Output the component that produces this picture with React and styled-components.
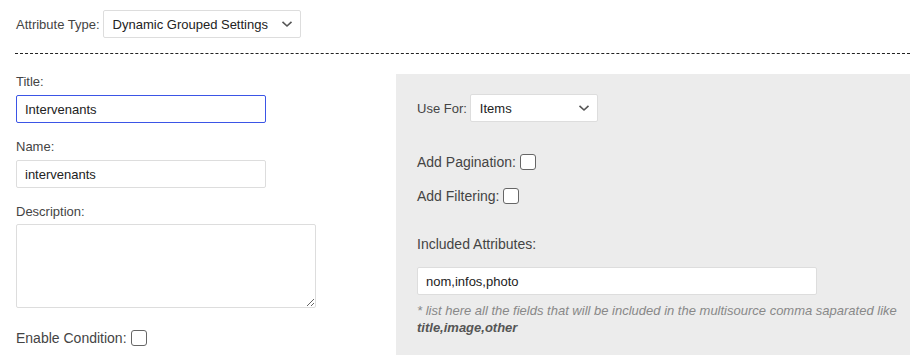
import styled, { createGlobalStyle } from "styled-components";

const GlobalStyle = createGlobalStyle`
  body {
    margin: 0;
    background: #fff;
    font-family: "Liberation Sans", Arial, sans-serif;
    font-size: 13px;
    color: #444;
    overflow: hidden;
  }
`;

function Chevron() {
  return (
    <svg width="12" height="8" viewBox="0 0 12 8">
      <path d="M1.5 1.8 L6 6 L10.5 1.8" fill="none" stroke="#555" strokeWidth="1.6" />
    </svg>
  );
}

function Select({ value, width }) {
  return (
    <SelectWrap $width={width}>
      <SelectBox defaultValue={value}>
        <option>{value}</option>
      </SelectBox>
      <Arrow>
        <Chevron />
      </Arrow>
    </SelectWrap>
  );
}

function CheckRow({ label, top }) {
  return (
    <InlineRow $top={top}>
      <span>{label}</span>
      <Check type="checkbox" />
    </InlineRow>
  );
}

export default function App() {
  return (
    <Page>
      <GlobalStyle />
      <TopRow>
        <Label>Attribute Type:</Label>
        <Select value="Dynamic Grouped Settings" width={198} />
      </TopRow>
      <Divider />
      <Columns>
        <LeftCol>
          <Label>Title:</Label>
          <TextInput $width={250} $focused defaultValue="Intervenants" />
          <Label $top={16}>Name:</Label>
          <TextInput $width={250} defaultValue="intervenants" />
          <Label $top={16}>Description:</Label>
          <TextArea />
          <InlineRow $top={22}>
            <span>Enable Condition:</span>
            <Check type="checkbox" />
          </InlineRow>
        </LeftCol>
        <Panel>
          <TopRow>
            <Label>Use For:</Label>
            <Select value="Items" width={128} />
          </TopRow>
          <CheckRow label="Add Pagination:" top={32} />
          <CheckRow label="Add Filtering:" top={18} />
          <Label $top={33} $size={14}>Included Attributes:</Label>
          <TextInput $width={400} $gap={15} defaultValue="nom,infos,photo" />
          <Help>
            * list here all the fields that will be included in the multisource comma saparated like{" "}
            <b>title,image,other</b>
          </Help>
        </Panel>
      </Columns>
    </Page>
  );
}

const Page = styled.div`
  padding: 10px 0 0 16px;
`;

const TopRow = styled.div`
  display: flex;
  align-items: center;
  gap: 3px;
`;

const Label = styled.div`
  line-height: 15px;
  font-size: ${(p) => p.$size || 13}px;
  color: #444;
  margin-top: ${(p) => p.$top || 0}px;
`;

const SelectWrap = styled.div`
  position: relative;
  width: ${(p) => p.$width}px;
  height: 28px;
`;

const SelectBox = styled.select`
  appearance: none;
  width: 100%;
  height: 100%;
  box-sizing: border-box;
  border: 1px solid #ddd;
  border-radius: 2px;
  background: #fff;
  padding: 0 28px 0 9px;
  font-family: "Liberation Sans", Arial, sans-serif;
  font-size: 13px;
  color: #222;
  outline: none;
`;

const Arrow = styled.span`
  position: absolute;
  right: 8px;
  top: 10px;
  display: flex;
  pointer-events: none;
`;

const Divider = styled.div`
  border-top: 1px dashed #222;
  margin: 15px 0 20px -1px;
`;

const Columns = styled.div`
  display: flex;
  align-items: flex-start;
`;

const LeftCol = styled.div`
  width: 380px;
  display: flex;
  flex-direction: column;
  align-items: flex-start;
`;

const TextInput = styled.input`
  box-sizing: border-box;
  width: ${(p) => p.$width}px;
  height: 28px;
  margin-top: ${(p) => p.$gap || 6}px;
  padding: 0 8px;
  border: 1px solid ${(p) => (p.$focused ? "#3b55e6" : "#ddd")};
  border-radius: 2px;
  background: #fff;
  font-family: "Liberation Sans", Arial, sans-serif;
  font-size: 13px;
  color: #222;
  outline: none;
`;

const TextArea = styled.textarea`
  box-sizing: border-box;
  width: 300px;
  height: 84px;
  margin-top: 5px;
  border: 1px solid #ddd;
  border-radius: 2px;
  outline: none;
  font-family: "Liberation Sans", Arial, sans-serif;
`;

const InlineRow = styled.label`
  display: flex;
  align-items: center;
  gap: 4px;
  height: 16px;
  margin-top: ${(p) => p.$top || 0}px;
  color: #444;
  font-size: 14px;
`;

const Check = styled.input`
  appearance: none;
  margin: 0;
  width: 16px;
  height: 16px;
  border: 1px solid #666;
  border-radius: 3px;
  background: #fff;
`;

const Panel = styled.div`
  flex: 1;
  height: 281px;
  box-sizing: border-box;
  background: #ececec;
  padding: 20px 8px 0 21px;
  display: flex;
  flex-direction: column;
  align-items: flex-start;
`;

const Help = styled.div`
  margin-top: 7px;
  font-size: 13px;
  line-height: 17px;
  font-style: italic;
  color: #888;

  b {
    color: #555;
  }
`;
